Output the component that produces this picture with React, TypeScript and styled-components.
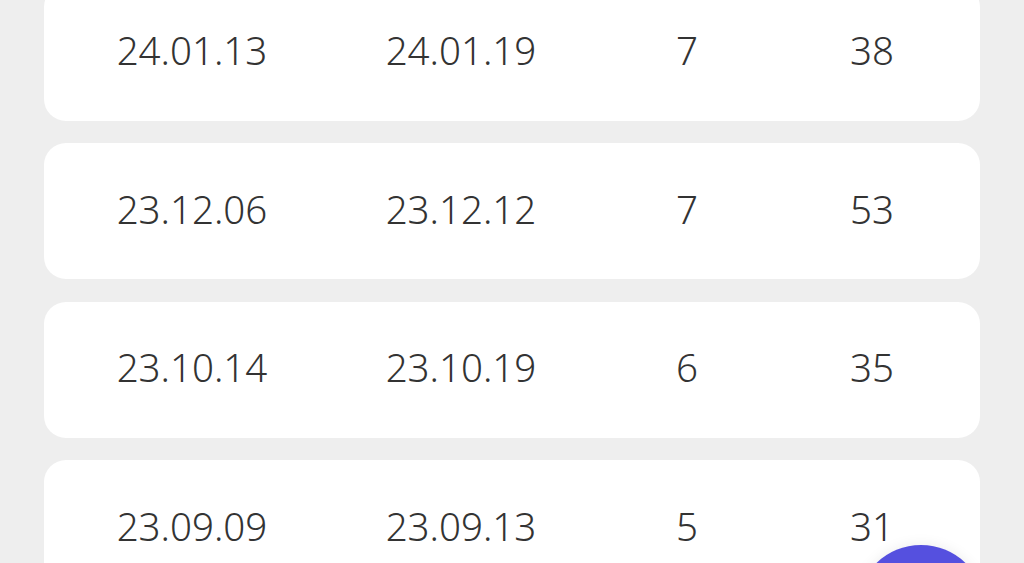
import React from "react";
import styled, { createGlobalStyle } from "styled-components";

const Global = createGlobalStyle`
  html, body {
    margin: 0;
    padding: 0;
    background: #eeeeee;
    overflow: hidden;
  }
  body {
    font-family: "Noto Sans", "Open Sans", sans-serif;
  }
`;

const Page = styled.div`
  width: 1024px;
  height: 563px;
  overflow: hidden;
  background: #eeeeee;
  position: relative;
`;

const List = styled.div`
  display: flex;
  flex-direction: column;
  gap: 22.5px;
  padding: 0 44px;
  margin-top: -15.5px;
`;

const Card = styled.div`
  height: 136px;
  box-sizing: border-box;
  padding-bottom: 4px;
  background: #ffffff;
  border-radius: 22px;
  display: grid;
  grid-template-columns: 296px 242px 210px 160px 1fr;
  align-items: center;
`;

const Cell = styled.div`
  text-align: center;
  font-size: 38.5px;
  font-weight: 350;
  color: #333333;
  line-height: 1;
  letter-spacing: 0;
`;

const Fab = styled.div`
  position: absolute;
  left: 857px;
  top: 545px;
  width: 128px;
  height: 128px;
  border-radius: 50%;
  background: #5550df;
  box-shadow: 0 0 14px rgba(0, 0, 0, 0.08);
`;

const rows = [
  ["24.01.13", "24.01.19", "7", "38"],
  ["23.12.06", "23.12.12", "7", "53"],
  ["23.10.14", "23.10.19", "6", "35"],
  ["23.09.09", "23.09.13", "5", "31"],
];

export default function App() {
  return (
    <Page>
      <Global />
      <List>
        {rows.map((r, i) => (
          <Card key={i}>
            {r.map((c, j) => (
              <Cell key={j}>{c}</Cell>
            ))}
          </Card>
        ))}
      </List>
      <Fab />
    </Page>
  );
}
